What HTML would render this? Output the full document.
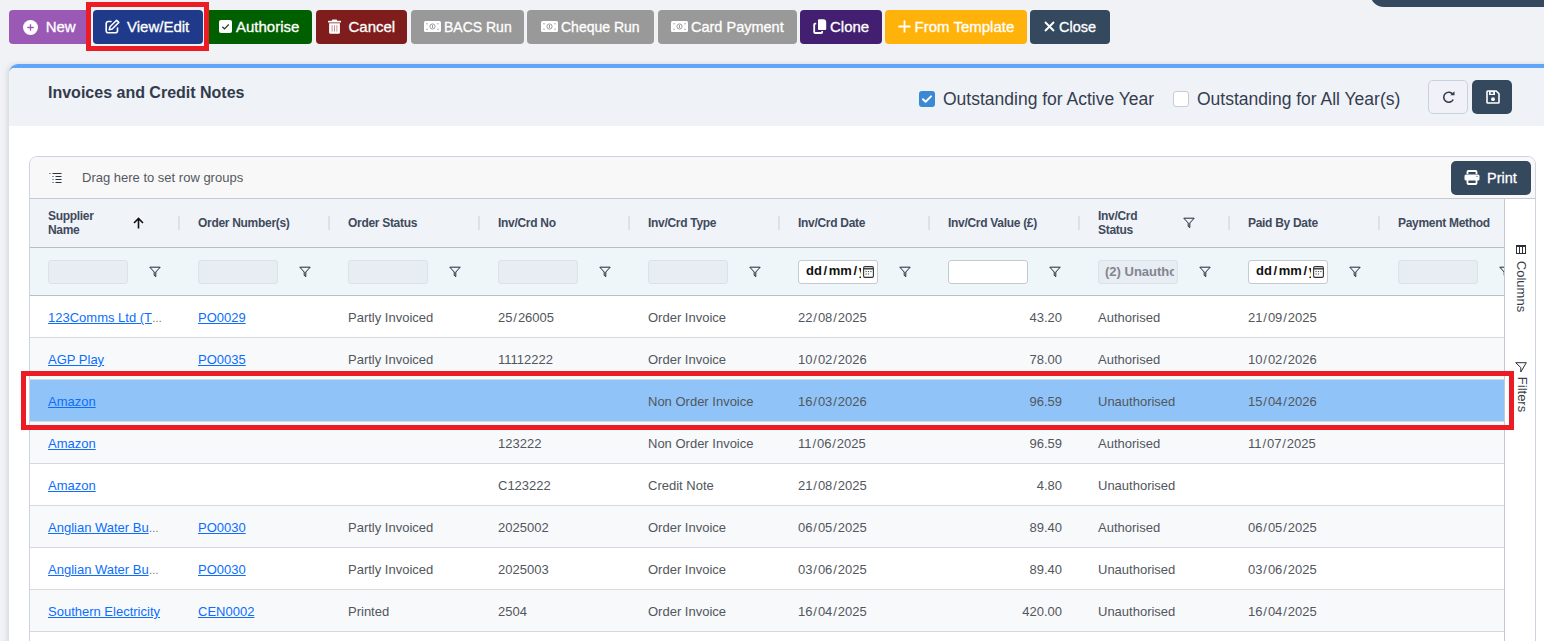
<!DOCTYPE html><html><head><meta charset="utf-8"><style>
*{box-sizing:border-box}
html,body{margin:0;padding:0;width:1544px;height:641px;overflow:hidden;background:#f0f2f6;font-family:"Liberation Sans",sans-serif}
.btn{position:absolute;top:10px;height:34px;border-radius:4px;color:#fff;font-size:15px;line-height:34px;white-space:nowrap}
.btn .t{position:absolute;top:0;-webkit-text-stroke:0.3px #fff}
.topright{position:absolute;left:1370px;top:-30px;width:200px;height:37px;background:#34495e;border-bottom-left-radius:14px}
.panel{position:absolute;left:9px;top:64px;width:1560px;height:700px;background:#fff;border-top:4px solid #60a5fa;border-top-left-radius:9px;box-shadow:-2px 0 5px rgba(0,0,0,.1)}
.phead{position:absolute;left:0;top:0;right:0;height:58px;background:#eff2f7;border-top-left-radius:5px}
.title{position:absolute;left:39px;top:16px;font-size:16px;font-weight:bold;color:#313b4c}
.cb{position:absolute;top:91px;width:16px;height:16px;border-radius:3px}
.lbl{position:absolute;top:89px;font-size:17.5px;color:#343d4f;white-space:nowrap}
.grid{position:absolute;left:29px;top:156px;width:1507px;height:500px;border:1px solid #cdd3e0;border-radius:8px 8px 0 0;background:#fff;overflow:hidden}
.gp{position:absolute;left:0;top:0;width:1505px;height:42px;background:#f8f8f8;border-bottom:1px solid #c4c9d4}
.hdr{position:absolute;left:0;top:42px;width:1474px;height:49px;background:#f0f3f8;border-bottom:1px solid #b8bec9}
.flt{position:absolute;left:0;top:91px;width:1474px;height:48px;background:#eff6fa;border-bottom:1px solid #b8bec9}
.row{position:absolute;left:0;width:1474px;height:42px;border-bottom:1px solid #d6d9de}
.cell{position:absolute;top:1px;height:41px;line-height:41px;font-size:13px;color:#52565d;white-space:nowrap}
.lnk{color:#0b6efd;text-decoration:underline}
.hc{position:absolute;font-size:12px;font-weight:bold;color:#404a5c;letter-spacing:-0.3px;line-height:14px;white-space:nowrap}
.sep{position:absolute;top:17px;width:2px;height:14px;background:#dde1e8}
.fin{position:absolute;top:12px;width:80px;height:24px;border:1px solid #dde2ea;border-radius:3px;background:#e8ecf3}
.fi{position:absolute}
.side{position:absolute;left:1474px;top:42px;width:31px;height:460px;background:#fff;border-left:1px solid #c4c9d4}
</style></head><body>
<div class="topright"></div>
<div class="btn" style="left:9px;width:81px;background:#9b59b6"><span class="t" style="left:36.7px;font-size:15px">New</span></div>
<div class="btn" style="left:93px;width:110px;background:#1f3a8a"><span class="t" style="left:34px;font-size:15px">View/Edit</span></div>
<div class="btn" style="left:206px;width:106px;background:#006000"><span class="t" style="left:30px;font-size:15px">Authorise</span></div>
<div class="btn" style="left:316px;width:91px;background:#7f1c1c"><span class="t" style="left:32.5px;font-size:15px">Cancel</span></div>
<div class="btn" style="left:411px;width:113px;background:#999999"><span class="t" style="left:33px;font-size:14px">BACS Run</span></div>
<div class="btn" style="left:527px;width:127px;background:#999999"><span class="t" style="left:34px;font-size:14px">Cheque Run</span></div>
<div class="btn" style="left:658px;width:139px;background:#999999"><span class="t" style="left:33px;font-size:14.5px">Card Payment</span></div>
<div class="btn" style="left:800px;width:82px;background:#421f70"><span class="t" style="left:30px;font-size:15px">Clone</span></div>
<div class="btn" style="left:885px;width:142px;background:#ffb30a"><span class="t" style="left:29.5px;font-size:15px">From Template</span></div>
<div class="btn" style="left:1030px;width:80px;background:#34495e"><span class="t" style="left:29px;font-size:14.5px">Close</span></div>
<svg style="position:absolute;left:23px;top:19.5px" width="15" height="15" viewBox="0 0 15 15"><circle cx="7.5" cy="7.5" r="7.5" fill="#fff"/><path d="M7.5 4.3v6.4M4.3 7.5h6.4" stroke="#9b59b6" stroke-width="1.3"/></svg>
<svg style="position:absolute;left:105px;top:19px" width="15" height="15" viewBox="0 0 15 15"><path d="M6 2.5H3.2A2 2 0 0 0 1.2 4.5v7.3a2 2 0 0 0 2 2h7.3a2 2 0 0 0 2-2V9" fill="none" stroke="#fff" stroke-width="1.6" stroke-linecap="round"/><path d="M11.6 1.2l2.2 2.2-6.6 6.6-3 .8.8-3z" fill="none" stroke="#fff" stroke-width="1.5" stroke-linejoin="round"/></svg>
<svg style="position:absolute;left:219px;top:20px" width="13" height="13" viewBox="0 0 13 13"><rect width="13" height="13" rx="2" fill="#fff"/><path d="M3.3 6.8l2.2 2 4.2-4.3" fill="none" stroke="#1f3b1f" stroke-width="1.2"/></svg>
<svg style="position:absolute;left:328px;top:19px" width="13" height="15" viewBox="0 0 13 15"><path d="M4.3 0.6h4.4l.5 1.2H12.6a.6 .6 0 0 1 .4.6v1.2H0V2.4a.6 .6 0 0 1 .4-.6H3.8z" fill="#fff"/><path d="M1.1 4.3h10.8v9.2a1.2 1.2 0 0 1-1.2 1.2H2.3a1.2 1.2 0 0 1-1.2-1.2z" fill="#fff"/><path d="M4.1 6.2v6.4M6.5 6.2v6.4M8.9 6.2v6.4" stroke="#b07a7a" stroke-width=".8"/></svg>
<svg style="position:absolute;left:423.5px;top:21px" width="17" height="11" viewBox="0 0 17 11"><rect x="0" y="0" width="17" height="11" rx="1.5" fill="#fff"/><circle cx="8.5" cy="5.5" r="2.6" fill="none" stroke="#9a9a9a" stroke-width="1"/><rect x="8" y="4" width="1" height="3" fill="#9a9a9a"/><circle cx="3" cy="2.8" r=".7" fill="#9a9a9a"/><circle cx="14" cy="2.8" r=".7" fill="#9a9a9a"/><circle cx="3" cy="8.2" r=".7" fill="#9a9a9a"/><circle cx="14" cy="8.2" r=".7" fill="#9a9a9a"/></svg>
<svg style="position:absolute;left:540.5px;top:21px" width="17" height="11" viewBox="0 0 17 11"><rect x="0" y="0" width="17" height="11" rx="1.5" fill="#fff"/><circle cx="8.5" cy="5.5" r="2.6" fill="none" stroke="#9a9a9a" stroke-width="1"/><rect x="8" y="4" width="1" height="3" fill="#9a9a9a"/><circle cx="3" cy="2.8" r=".7" fill="#9a9a9a"/><circle cx="14" cy="2.8" r=".7" fill="#9a9a9a"/><circle cx="3" cy="8.2" r=".7" fill="#9a9a9a"/><circle cx="14" cy="8.2" r=".7" fill="#9a9a9a"/></svg>
<svg style="position:absolute;left:670.5px;top:21px" width="17" height="11" viewBox="0 0 17 11"><rect x="0" y="0" width="17" height="11" rx="1.5" fill="#fff"/><circle cx="8.5" cy="5.5" r="2.6" fill="none" stroke="#9a9a9a" stroke-width="1"/><rect x="8" y="4" width="1" height="3" fill="#9a9a9a"/><circle cx="3" cy="2.8" r=".7" fill="#9a9a9a"/><circle cx="14" cy="2.8" r=".7" fill="#9a9a9a"/><circle cx="3" cy="8.2" r=".7" fill="#9a9a9a"/><circle cx="14" cy="8.2" r=".7" fill="#9a9a9a"/></svg>
<svg style="position:absolute;left:813px;top:19px" width="14" height="15" viewBox="0 0 14 15"><path d="M3.2 4.6H2.2a1 1 0 0 0-1 1V13a1 1 0 0 0 1 1h6a1 1 0 0 0 1-1v-1" fill="none" stroke="#fff" stroke-width="1.8"/><path d="M6 0.3h4.2a3 3 0 0 1 3 3V10a1 1 0 0 1-1 1H6a1 1 0 0 1-1-1V1.3a1 1 0 0 1 1-1z" fill="#fff"/></svg>
<svg style="position:absolute;left:898px;top:20px" width="13" height="13" viewBox="0 0 13 13"><path d="M6.5 0.5v12M0.5 6.5h12" stroke="#fff" stroke-width="1.8"/></svg>
<svg style="position:absolute;left:1044px;top:21px" width="11" height="11" viewBox="0 0 11 11"><path d="M1 1l9 9M10 1l-9 9" stroke="#fff" stroke-width="1.9"/></svg>
<div style="position:absolute;left:86px;top:2px;width:123px;height:49px;border:5px solid #ec1c24"></div>
<div class="panel"><div class="phead"></div><div class="title">Invoices and Credit Notes</div></div>
<div class="cb" style="left:919px;background:#3b88d4"><svg width="16" height="16" viewBox="0 0 16 16" style="position:absolute;left:0;top:0"><path d="M4 8.2l2.6 2.6L12 5.4" fill="none" stroke="#fff" stroke-width="2" stroke-linecap="round" stroke-linejoin="round"/></svg></div>
<div class="lbl" style="left:943px">Outstanding for Active Year</div>
<div class="cb" style="left:1173px;background:#fff;border:1px solid #c7ccd6"></div>
<div class="lbl" style="left:1197px">Outstanding for All Year(s)</div>
<div style="position:absolute;left:1428px;top:80px;width:40px;height:34px;border:1px solid #c9d0e4;border-radius:5px;background:#f0f2f7"><svg style="position:absolute;left:13px;top:10px" width="14" height="13" viewBox="0 0 14 13"><path d="M11.2 8.5A5 5 0 1 1 11 3.6" fill="none" stroke="#343d4f" stroke-width="1.6"/><path d="M8.3 4.3h4.2V0.2z" fill="#343d4f"/></svg></div>
<div style="position:absolute;left:1472px;top:80px;width:40px;height:34px;border-radius:5px;background:#34495e"><svg style="position:absolute;left:13.5px;top:10px" width="14" height="14" viewBox="0 0 14 14"><path d="M1.8 1h8.4l2.8 2.8v8.4a.8 .8 0 0 1-.8.8H1.8a.8 .8 0 0 1-.8-.8V1.8a.8 .8 0 0 1 .8-.8z" fill="none" stroke="#fff" stroke-width="1.6" stroke-linejoin="round"/><rect x="3" y="1" width="6" height="4" fill="#fff"/><rect x="4.6" y="2.2" width="2.6" height="1.6" fill="#34495e"/><circle cx="7" cy="9.2" r="1.9" fill="#fff"/></svg></div>
<div class="grid"><div class="gp"></div><svg style="position:absolute;left:19px;top:16px" width="14" height="11" viewBox="0 0 14 11"><path d="M0.5 0.5h1M3.5 0.5h9M3.5 3.5h1M6.5 3.5h6M3.5 6.5h1M6.5 6.5h6M3.5 9.5h1M6.5 9.5h6" stroke="#2b3240" stroke-width="1"/></svg><div style="position:absolute;left:52px;top:0;line-height:42px;font-size:13px;color:#55595f">Drag here to set row groups</div><div style="position:absolute;left:1421px;top:4px;width:80px;height:34px;border-radius:5px;background:#34495e"><svg style="position:absolute;left:13px;top:9px" width="16" height="15" viewBox="0 0 16 15"><path d="M3.5 4V1.8a.8 .8 0 0 1 .8-.8h7.4a.8 .8 0 0 1 .8.8V4" fill="none" stroke="#fff" stroke-width="1.8"/><rect x="0.5" y="4.5" width="15" height="6" rx="1.5" fill="#fff"/><path d="M3.5 9v4.2a.8 .8 0 0 0 .8.8h7.4a.8 .8 0 0 0 .8-.8V9" fill="none" stroke="#fff" stroke-width="1.8"/><circle cx="13" cy="6.5" r=".6" fill="#34495e"/></svg><span style="position:absolute;left:36px;top:0;line-height:34px;font-size:14.5px;color:#fff;-webkit-text-stroke:0.3px #fff">Print</span></div><div class="hdr"></div><div class="flt"></div><div class="hc" style="left:18px;top:52px">Supplier<br>Name</div><div class="sep" style="left:148px;top:59px"></div><div class="fin" style="left:18px;top:103px;"></div><svg class="fi" style="left:119px;top:109px" width="12" height="12" viewBox="0 0 12 12"><path d="M0.8 1.2h10.4L6.8 6v4.6L5.2 9.4V6z" fill="none" stroke="#1f2937" stroke-width="1" stroke-linejoin="round"/></svg><div class="hc" style="left:168px;top:59px">Order Number(s)</div><div class="sep" style="left:298px;top:59px"></div><div class="fin" style="left:168px;top:103px;"></div><svg class="fi" style="left:269px;top:109px" width="12" height="12" viewBox="0 0 12 12"><path d="M0.8 1.2h10.4L6.8 6v4.6L5.2 9.4V6z" fill="none" stroke="#1f2937" stroke-width="1" stroke-linejoin="round"/></svg><div class="hc" style="left:318px;top:59px">Order Status</div><div class="sep" style="left:448px;top:59px"></div><div class="fin" style="left:318px;top:103px;"></div><svg class="fi" style="left:419px;top:109px" width="12" height="12" viewBox="0 0 12 12"><path d="M0.8 1.2h10.4L6.8 6v4.6L5.2 9.4V6z" fill="none" stroke="#1f2937" stroke-width="1" stroke-linejoin="round"/></svg><div class="hc" style="left:468px;top:59px">Inv/Crd No</div><div class="sep" style="left:598px;top:59px"></div><div class="fin" style="left:468px;top:103px;"></div><svg class="fi" style="left:569px;top:109px" width="12" height="12" viewBox="0 0 12 12"><path d="M0.8 1.2h10.4L6.8 6v4.6L5.2 9.4V6z" fill="none" stroke="#1f2937" stroke-width="1" stroke-linejoin="round"/></svg><div class="hc" style="left:618px;top:59px">Inv/Crd Type</div><div class="sep" style="left:748px;top:59px"></div><div class="fin" style="left:618px;top:103px;"></div><svg class="fi" style="left:719px;top:109px" width="12" height="12" viewBox="0 0 12 12"><path d="M0.8 1.2h10.4L6.8 6v4.6L5.2 9.4V6z" fill="none" stroke="#1f2937" stroke-width="1" stroke-linejoin="round"/></svg><div class="hc" style="left:768px;top:59px">Inv/Crd Date</div><div class="sep" style="left:898px;top:59px"></div><div class="fin" style="left:768px;top:103px;background:#fff;border-color:#c5cad3"><span style="position:absolute;left:7px;top:-1px;width:55px;overflow:hidden;line-height:22px;font-size:13px;font-weight:bold;color:#111;white-space:nowrap">dd<span style="margin:0 1.6px">/</span>mm<span style="margin:0 1.6px">/</span>yyyy</span><svg style="position:absolute;left:64px;top:4.5px" width="11" height="12" viewBox="0 0 11 12"><rect x=".6" y=".6" width="9.8" height="10.8" rx="1.3" fill="none" stroke="#333" stroke-width="1.1"/><path d="M.6 2.8h9.8" stroke="#333" stroke-width="1.4"/><path d="M2.5 5.6h1.2M4.9 5.6h1.2M7.3 5.6h1.2M2.5 8h1.2M4.9 8h1.2" stroke="#444" stroke-width="1"/></svg></div><svg class="fi" style="left:869px;top:109px" width="12" height="12" viewBox="0 0 12 12"><path d="M0.8 1.2h10.4L6.8 6v4.6L5.2 9.4V6z" fill="none" stroke="#1f2937" stroke-width="1" stroke-linejoin="round"/></svg><div class="hc" style="left:918px;top:59px">Inv/Crd Value (£)</div><div class="sep" style="left:1048px;top:59px"></div><div class="fin" style="left:918px;top:103px;background:#fff;border-color:#c5cad3"></div><svg class="fi" style="left:1019px;top:109px" width="12" height="12" viewBox="0 0 12 12"><path d="M0.8 1.2h10.4L6.8 6v4.6L5.2 9.4V6z" fill="none" stroke="#1f2937" stroke-width="1" stroke-linejoin="round"/></svg><div class="hc" style="left:1068px;top:52px">Inv/Crd<br>Status</div><div class="sep" style="left:1198px;top:59px"></div><div class="fin" style="left:1068px;top:103px;"><span style="position:absolute;left:6px;top:0;line-height:22px;font-size:13px;font-weight:bold;color:#80868e;width:69px;overflow:hidden;white-space:nowrap">(2) Unauthorised</span></div><svg class="fi" style="left:1169px;top:109px" width="12" height="12" viewBox="0 0 12 12"><path d="M0.8 1.2h10.4L6.8 6v4.6L5.2 9.4V6z" fill="none" stroke="#1f2937" stroke-width="1" stroke-linejoin="round"/></svg><div class="hc" style="left:1218px;top:59px">Paid By Date</div><div class="sep" style="left:1348px;top:59px"></div><div class="fin" style="left:1218px;top:103px;background:#fff;border-color:#c5cad3"><span style="position:absolute;left:7px;top:-1px;width:55px;overflow:hidden;line-height:22px;font-size:13px;font-weight:bold;color:#111;white-space:nowrap">dd<span style="margin:0 1.6px">/</span>mm<span style="margin:0 1.6px">/</span>yyyy</span><svg style="position:absolute;left:64px;top:4.5px" width="11" height="12" viewBox="0 0 11 12"><rect x=".6" y=".6" width="9.8" height="10.8" rx="1.3" fill="none" stroke="#333" stroke-width="1.1"/><path d="M.6 2.8h9.8" stroke="#333" stroke-width="1.4"/><path d="M2.5 5.6h1.2M4.9 5.6h1.2M7.3 5.6h1.2M2.5 8h1.2M4.9 8h1.2" stroke="#444" stroke-width="1"/></svg></div><svg class="fi" style="left:1319px;top:109px" width="12" height="12" viewBox="0 0 12 12"><path d="M0.8 1.2h10.4L6.8 6v4.6L5.2 9.4V6z" fill="none" stroke="#1f2937" stroke-width="1" stroke-linejoin="round"/></svg><div class="hc" style="left:1368px;top:59px">Payment Method</div><div class="fin" style="left:1368px;top:103px;"></div><svg class="fi" style="left:1469px;top:109px" width="12" height="12" viewBox="0 0 12 12"><path d="M0.8 1.2h10.4L6.8 6v4.6L5.2 9.4V6z" fill="none" stroke="#1f2937" stroke-width="1" stroke-linejoin="round"/></svg><svg class="fi" style="left:1153px;top:60px" width="12" height="12" viewBox="0 0 12 12"><path d="M0.8 1.2h10.4L6.8 6v4.6L5.2 9.4V6z" fill="none" stroke="#1f2937" stroke-width="1" stroke-linejoin="round"/></svg><svg style="position:absolute;left:103px;top:60px" width="11" height="12" viewBox="0 0 11 12"><path d="M5.5 11.5V1.5M1 6l4.5-4.5L10 6" fill="none" stroke="#111" stroke-width="1.6"/></svg><div class="row" style="top:139px;background:#fff"><div class="cell lnk" style="left:18px">123Comms Ltd (T<span style="display:inline-block;font-size:10px;letter-spacing:-0.5px;color:#666;text-decoration:none">…</span></div><div class="cell lnk" style="left:168px">PO0029</div><div class="cell" style="left:318px">Partly Invoiced</div><div class="cell" style="left:468px">25<span style="margin:0 0.9px">/</span>26005</div><div class="cell" style="left:618px">Order Invoice</div><div class="cell" style="left:768px">22<span style="margin:0 0.9px">/</span>08<span style="margin:0 0.9px">/</span>2025</div><div class="cell" style="left:900px;width:132px;text-align:right">43.20</div><div class="cell" style="left:1068px">Authorised</div><div class="cell" style="left:1218px">21<span style="margin:0 0.9px">/</span>09<span style="margin:0 0.9px">/</span>2025</div></div><div class="row" style="top:181px;background:#f8f9fb"><div class="cell lnk" style="left:18px">AGP Play</div><div class="cell lnk" style="left:168px">PO0035</div><div class="cell" style="left:318px">Partly Invoiced</div><div class="cell" style="left:468px">11112222</div><div class="cell" style="left:618px">Order Invoice</div><div class="cell" style="left:768px">10<span style="margin:0 0.9px">/</span>02<span style="margin:0 0.9px">/</span>2026</div><div class="cell" style="left:900px;width:132px;text-align:right">78.00</div><div class="cell" style="left:1068px">Authorised</div><div class="cell" style="left:1218px">10<span style="margin:0 0.9px">/</span>02<span style="margin:0 0.9px">/</span>2026</div></div><div class="row" style="top:223px;background:#90c4f8"><div class="cell lnk" style="left:18px">Amazon</div><div class="cell" style="left:618px">Non Order Invoice</div><div class="cell" style="left:768px">16<span style="margin:0 0.9px">/</span>03<span style="margin:0 0.9px">/</span>2026</div><div class="cell" style="left:900px;width:132px;text-align:right">96.59</div><div class="cell" style="left:1068px">Unauthorised</div><div class="cell" style="left:1218px">15<span style="margin:0 0.9px">/</span>04<span style="margin:0 0.9px">/</span>2026</div></div><div class="row" style="top:265px;background:#f8f9fb"><div class="cell lnk" style="left:18px">Amazon</div><div class="cell" style="left:468px">123222</div><div class="cell" style="left:618px">Non Order Invoice</div><div class="cell" style="left:768px">11<span style="margin:0 0.9px">/</span>06<span style="margin:0 0.9px">/</span>2025</div><div class="cell" style="left:900px;width:132px;text-align:right">96.59</div><div class="cell" style="left:1068px">Authorised</div><div class="cell" style="left:1218px">11<span style="margin:0 0.9px">/</span>07<span style="margin:0 0.9px">/</span>2025</div></div><div class="row" style="top:307px;background:#fff"><div class="cell lnk" style="left:18px">Amazon</div><div class="cell" style="left:468px">C123222</div><div class="cell" style="left:618px">Credit Note</div><div class="cell" style="left:768px">21<span style="margin:0 0.9px">/</span>08<span style="margin:0 0.9px">/</span>2025</div><div class="cell" style="left:900px;width:132px;text-align:right">4.80</div><div class="cell" style="left:1068px">Unauthorised</div></div><div class="row" style="top:349px;background:#f8f9fb"><div class="cell lnk" style="left:18px">Anglian Water Bu<span style="display:inline-block;font-size:10px;letter-spacing:-0.5px;color:#666;text-decoration:none">…</span></div><div class="cell lnk" style="left:168px">PO0030</div><div class="cell" style="left:318px">Partly Invoiced</div><div class="cell" style="left:468px">2025002</div><div class="cell" style="left:618px">Order Invoice</div><div class="cell" style="left:768px">06<span style="margin:0 0.9px">/</span>05<span style="margin:0 0.9px">/</span>2025</div><div class="cell" style="left:900px;width:132px;text-align:right">89.40</div><div class="cell" style="left:1068px">Authorised</div><div class="cell" style="left:1218px">06<span style="margin:0 0.9px">/</span>05<span style="margin:0 0.9px">/</span>2025</div></div><div class="row" style="top:391px;background:#fff"><div class="cell lnk" style="left:18px">Anglian Water Bu<span style="display:inline-block;font-size:10px;letter-spacing:-0.5px;color:#666;text-decoration:none">…</span></div><div class="cell lnk" style="left:168px">PO0030</div><div class="cell" style="left:318px">Partly Invoiced</div><div class="cell" style="left:468px">2025003</div><div class="cell" style="left:618px">Order Invoice</div><div class="cell" style="left:768px">03<span style="margin:0 0.9px">/</span>06<span style="margin:0 0.9px">/</span>2025</div><div class="cell" style="left:900px;width:132px;text-align:right">89.40</div><div class="cell" style="left:1068px">Unauthorised</div><div class="cell" style="left:1218px">03<span style="margin:0 0.9px">/</span>06<span style="margin:0 0.9px">/</span>2025</div></div><div class="row" style="top:433px;background:#f8f9fb"><div class="cell lnk" style="left:18px">Southern Electricity</div><div class="cell lnk" style="left:168px">CEN0002</div><div class="cell" style="left:318px">Printed</div><div class="cell" style="left:468px">2504</div><div class="cell" style="left:618px">Order Invoice</div><div class="cell" style="left:768px">16<span style="margin:0 0.9px">/</span>04<span style="margin:0 0.9px">/</span>2025</div><div class="cell" style="left:900px;width:132px;text-align:right">420.00</div><div class="cell" style="left:1068px">Unauthorised</div><div class="cell" style="left:1218px">16<span style="margin:0 0.9px">/</span>04<span style="margin:0 0.9px">/</span>2025</div></div><div class="row" style="top:475px;background:#fff"></div><div class="side"></div><div style="position:absolute;left:1483px;top:89px;width:14px;height:70px;"><svg style="position:absolute;left:2.5px;top:-1.5px" width="10" height="9" viewBox="0 0 10 9"><rect x=".5" y=".5" width="9" height="8" fill="none" stroke="#2b2f38"/><path d="M.5 1.3h9" stroke="#2b2f38" stroke-width="1.6"/><path d="M3.5 1v8M6.5 1v8" stroke="#2b2f38"/></svg><div style="position:absolute;left:-22px;top:33px;width:60px;transform:rotate(90deg);font-size:13px;color:#3a3f47;text-align:center">Columns</div></div><div style="position:absolute;left:1483px;top:204px;width:14px;height:60px;"><svg style="position:absolute;left:2px;top:0.5px" width="12" height="11" viewBox="0 0 12 11"><path d="M.7 .7h10.6L5.8 10V5.6z" fill="none" stroke="#2b2f38" stroke-width="1" stroke-linejoin="round"/></svg><div style="position:absolute;left:-21px;top:26px;width:60px;transform:rotate(90deg);font-size:13px;color:#3a3f47;text-align:center">Filters</div></div></div>
<div style="position:absolute;left:21px;top:371px;width:1493px;height:59px;border:5px solid #ec1c24"></div>
</body></html>
